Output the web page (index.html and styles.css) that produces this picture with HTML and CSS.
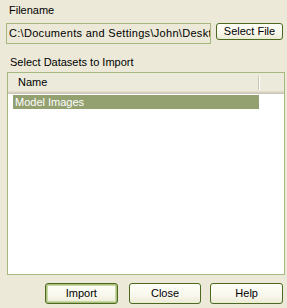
FILE: index.html
```html
<!DOCTYPE html>
<html>
<head>
  <title>Import Datasets</title>
  <meta charset="UTF-8">
  <link rel="stylesheet" href="styles.css">
</head>
<body>
  <div class="dialog">
    <div class="field-label">Filename</div>
    <div class="file-row">
      <div class="file-box"><span class="file-path">C:\Documents and Settings\John\Desktop\models.dat</span></div>
      <button class="btn btn-small">Select File</button>
    </div>

    <div class="section-label">Select Datasets to Import</div>
    <div class="list">
      <div class="list-header">
        <div class="col-name">Name</div>
        <div class="col-divider"></div>
        <div class="col-rest"></div>
      </div>
      <div class="list-body">
        <div class="list-row selected">Model Images</div>
      </div>
    </div>

    <div class="actions">
      <button class="btn btn-default">Import</button>
      <button class="btn btn-close">Close</button>
      <button class="btn btn-help">Help</button>
    </div>
  </div>
</body>
</html>
```

FILE: styles.css
```css
:root {
  --window-bg: #ece9d8;
  --edit-border: #a5b97f;
  --btn-border: #4b6a1f;
  --btn-ring: #a9bf7c;
  --highlight: #93a070;
  --header-bg: #ebeadb;
}

* {
  box-sizing: border-box;
}

body {
  margin: 0;
  background: var(--window-bg);
  font-family: "Liberation Sans", Arial, sans-serif;
  font-size: 11px;
  color: #000;
}

.dialog {
  width: 287px;
  height: 308px;
  padding: 4px 4px 0 6px;
  display: flex;
  flex-direction: column;
}

.field-label {
  padding-left: 3px;
  line-height: 13px;
  margin-bottom: 6px;
}

.file-row {
  display: flex;
  align-items: flex-start;
  gap: 5px;
}

.file-box {
  width: 205px;
  height: 21px;
  border: 1px solid var(--edit-border);
  padding: 3px 0 0 2px;
  line-height: 13px;
  white-space: nowrap;
  overflow: hidden;
}

.file-path {
  display: block;
  width: 202px;
  overflow: hidden;
  letter-spacing: 0.3px;
}

/* XP olive style push buttons */
.btn {
  font-family: inherit;
  font-size: 11px;
  color: #000;
  border: 1px solid var(--btn-border);
  border-radius: 3px;
  background: linear-gradient(180deg, #fffff8 0%, #f8f7ec 60%, #ecebd6 100%);
  padding: 0;
  margin: 0;
  line-height: 13px;
}

.btn-small {
  width: 67px;
  height: 17px;
}

.section-label {
  padding-left: 4px;
  line-height: 13px;
  margin-top: 12px;
}

.list {
  margin: 3px 0 0 1px;
  width: 278px;
  height: 203px;
  border: 1px solid var(--edit-border);
  background: #fff;
}

.list-header {
  display: flex;
  height: 21px;
  background: var(--header-bg);
  box-shadow: inset 0 -1px #cbc7b8, inset 0 -2px #d6d2c2, inset 0 -3px #e2decd;
}

.col-name {
  width: 250px;
  padding: 3px 0 0 10px;
  line-height: 13px;
}

.col-divider {
  width: 2px;
  margin: 3px 0 4px;
  border-left: 1px solid #c7c5b2;
  background: #fff;
}

.col-rest {
  flex: 1;
}

.list-body {
  padding: 1px 0 0 5px;
}

.list-row {
  width: 246px;
  height: 14px;
  line-height: 14px;
  padding-left: 2px;
}

.list-row.selected {
  background: var(--highlight);
  color: #fff;
}

.actions {
  display: flex;
  margin-top: 8px;
  padding-left: 39px;
}

.actions .btn {
  width: 73px;
  height: 21px;
}

.btn-default {
  box-shadow: inset 0 0 0 1px var(--btn-ring), inset 0 0 0 2px #c9d6a6;
}

.btn-close {
  margin-left: 11px;
}

.btn-help {
  margin-left: 9px;
}
```
